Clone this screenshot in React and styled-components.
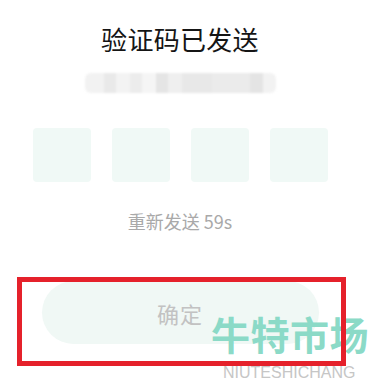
import React from 'react';
import styled, { createGlobalStyle } from 'styled-components';

const Global = createGlobalStyle`
  html, body { margin: 0; padding: 0; background: #fff; }
  body { font-family: "Noto Sans CJK SC", "Noto Sans", sans-serif; }
`

const Page = styled.div`
  position: relative;
  width: 369px;
  height: 382px;
  overflow: hidden;
  background: #fff;
`
const Column = styled.div`
  width: 360px;
  display: flex;
  flex-direction: column;
  align-items: center;
  padding-top: 26px;
`
const Title = styled.h1`
  margin: 0;
  font-size: 26px;
  line-height: 26px;
  font-weight: 400;
  color: #151515;
  letter-spacing: 0.3px;
`
const Masked = styled.div`
  margin-top: 21px;
  display: flex;
  width: 191px;
  height: 20px;
  border-radius: 6px;
  overflow: hidden;
  filter: blur(0.8px);
`
const Pixel = styled.div`
  flex: ${props => props.w || 1};
  background: ${props => props.c || '#eeeeee'};
`
const Boxes = styled.div`
  margin-top: 35px;
  display: flex;
  gap: 21px;
`
const Box = styled.div`
  width: 58px;
  height: 54px;
  border-radius: 4px;
  background: #f0f9f6;
`
const Resend = styled.div`
  margin-top: 28px;
  font-size: 18px;
  line-height: 22px;
  color: #a9a9a9;
`
const Confirm = styled.button`
  margin-top: 49px;
  width: 277px;
  height: 63px;
  border: none;
  border-radius: 32px;
  background: #f0f8f5;
  color: #c2c2c2;
  font-family: inherit;
  font-size: 22px;
  letter-spacing: 1px;
`
const Highlight = styled.div`
  position: absolute;
  left: 17px;
  top: 277px;
  width: 329px;
  height: 89px;
  box-sizing: border-box;
  border: 5px solid #e5212b;
`
const Watermark = styled.div`
  position: absolute;
  left: 211px;
  top: 312px;
  width: 158px;
  display: flex;
  flex-direction: column;
  align-items: flex-start;
`
const Brand = styled.div`
  font-size: 39px;
  line-height: 42px;
  font-weight: 700;
  color: #8bdac7;
  letter-spacing: 0.5px;
  white-space: nowrap;
`
const Pinyin = styled.div`
  margin-top: 11px;
  margin-left: 12px;
  font-family: "Liberation Sans", Arial, sans-serif;
  font-size: 16px;
  line-height: 16px;
  color: #c6c6c6;
  white-space: nowrap;
`

const pixels = [
  ['#f2f2f2', 2], ['#e9e9e9', 1.2], ['#f3f3f3', 1.5], ['#ececec', 1.2], ['#f5f5f5', 1.5],
  ['#e5e5e5', 1.2], ['#efefef', 1.5], ['#e8e8e8', 3], ['#ebebeb', 4], ['#e4e4e4', 1.3], ['#f2f2f2', 1.3]
]

function App() {
  return (
    <Page>
      <Global />
      <Column>
        <Title>验证码已发送</Title>
        <Masked>
          {pixels.map(([c, w], i) => <Pixel key={i} c={c} w={w} />)}
        </Masked>
        <Boxes>
          <Box />
          <Box />
          <Box />
          <Box />
        </Boxes>
        <Resend>重新发送 59s</Resend>
        <Confirm>确定</Confirm>
      </Column>
      <Watermark>
        <Brand>牛特市场</Brand>
        <Pinyin>NIUTESHICHANG</Pinyin>
      </Watermark>
      <Highlight />
    </Page>
  );
}

export default App;
